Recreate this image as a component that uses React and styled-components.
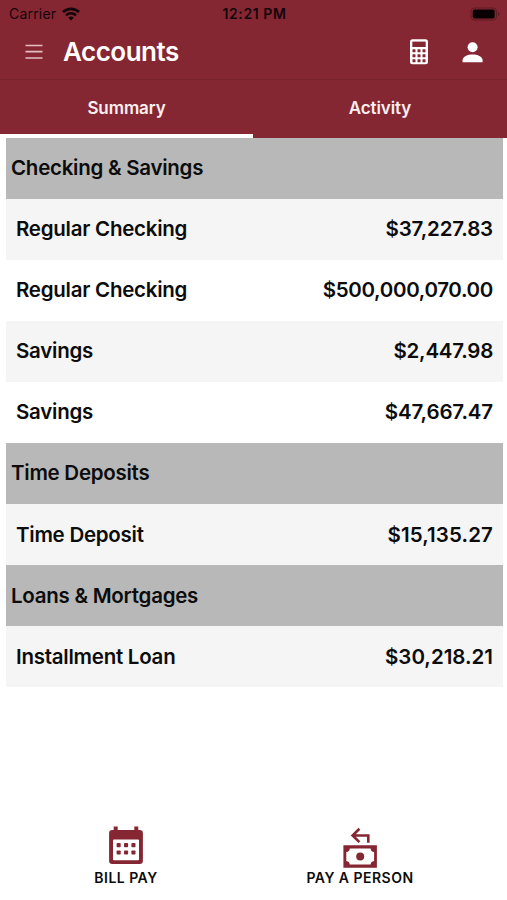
import React from "react";
import styled, { createGlobalStyle } from "styled-components";

const GlobalStyle = createGlobalStyle`
  * {
    box-sizing: border-box;
  }
  body {
    margin: 0;
    background: #ffffff;
    font-family: Inter, "Liberation Sans", sans-serif;
    color: #0c0c0c;
  }
`;

const Screen = styled.div`
  width: 507px;
  height: 900px;
  display: flex;
  flex-direction: column;
  overflow: hidden;
`;

const Header = styled.header`
  background: #852732;
  height: 138px;
`;

const StatusBar = styled.div`
  height: 27px;
  padding: 0 7px 0 9px;
  display: grid;
  grid-template-columns: 1fr auto 1fr;
  align-items: center;
  font-size: 14px;
  color: #14050a;
`;

const Carrier = styled.div`
  display: flex;
  align-items: center;
  gap: 6px;
  letter-spacing: 0.2px;
`;

const Time = styled.div`
  font-weight: 600;
  letter-spacing: 0.6px;
`;

const Battery = styled.svg`
  justify-self: end;
`;

const NavBar = styled.div`
  height: 53px;
  padding: 0 24px 2px 25px;
  display: flex;
  align-items: center;
  border-bottom: 1px solid #77222c;
`;

const Title = styled.h1`
  flex: 1;
  margin: 0 0 0 20px;
  padding-bottom: 2px;
  font-size: 26px;
  font-weight: 600;
  letter-spacing: -0.5px;
  color: #ffffff;
`;

const NavIcons = styled.div`
  display: flex;
  align-items: center;
  gap: 34px;
`;

const Tabs = styled.div`
  height: 58px;
  display: flex;
`;

const Tab = styled.div`
  width: ${(props) => (props.$active ? "253px" : "254px")};
  display: flex;
  align-items: center;
  justify-content: center;
  padding-top: 2px;
  border-bottom: 4px solid ${(props) => (props.$active ? "#ffffff" : "#852732")};
  font-size: 17px;
  font-weight: 600;
  letter-spacing: -0.1px;
  color: #fbeff0;
`;

const List = styled.main`
  flex: 1;
  padding: 0 4px 0 6px;
`;

const Section = styled.h2`
  height: 61.05px;
  margin: 0;
  padding: 0 5px 1.6px;
  display: flex;
  align-items: center;
  background: #b8b8b8;
  font-size: 20.5px;
  font-weight: 600;
  letter-spacing: -0.26px;
`;

const Row = styled.div`
  height: 61.05px;
  padding: 0 10px 1.6px;
  display: flex;
  align-items: center;
  justify-content: space-between;
  background: ${(props) => (props.$shaded ? "#f5f5f5" : "#ffffff")};
  font-size: 20.5px;
  font-weight: 600;
`;

const Label = styled.span`
  letter-spacing: -0.25px;
`;

const Balance = styled.span`
  letter-spacing: ${(props) => props.$spacing}px;
`;

const Footer = styled.footer`
  height: 76px;
  padding: 0 30px 0 9px;
  display: flex;
`;

const Action = styled.div`
  width: 234px;
  display: flex;
  flex-direction: column;
  align-items: center;
  gap: 1px;
  font-size: 14px;
  font-weight: 600;
  line-height: 18px;
  letter-spacing: 0.48px;
`;

const sections = [
  {
    title: "Checking & Savings",
    accounts: [
      { name: "Regular Checking", balance: "$37,227.83", spacing: -0.17 },
      { name: "Regular Checking", balance: "$500,000,070.00", spacing: -0.33 },
      { name: "Savings", balance: "$2,447.98", spacing: -0.25 },
      { name: "Savings", balance: "$47,667.47", spacing: -0.15 },
    ],
  },
  {
    title: "Time Deposits",
    accounts: [{ name: "Time Deposit", balance: "$15,135.27", spacing: 0.12 }],
  },
  {
    title: "Loans & Mortgages",
    accounts: [{ name: "Installment Loan", balance: "$30,218.21", spacing: 0 }],
  },
];

const WifiIcon = () => (
  <svg width="18" height="14" viewBox="0 0 18 14" fill="none" stroke="#14050a">
    <path d="M1 5a11.6 11.6 0 0 1 16 0" strokeWidth="2.7" />
    <path d="M4 8.3a7.3 7.3 0 0 1 10 0" strokeWidth="2.5" />
    <path d="M9 13.6 6.2 10.8a4 4 0 0 1 5.6 0z" fill="#14050a" stroke="none" />
  </svg>
);

const BatteryIcon = () => (
  <Battery width="30" height="14" viewBox="0 0 30 14">
    <rect x="1" y="1" width="25.5" height="12" rx="3.5" fill="none" stroke="#5d1a23" />
    <rect x="2.7" y="2.6" width="22" height="8.8" rx="2" fill="#080002" />
    <path d="M28 5v4q1.6-.6 1.6-2T28 5z" fill="#5d1a23" />
  </Battery>
);

const MenuIcon = () => (
  <svg width="18" height="16" viewBox="0 0 18 16" stroke="#e3bfc4" strokeWidth="1.7">
    <path d="M0.5 1.5h17M0.5 7.7h17M0.5 14h17" />
  </svg>
);

const CalculatorIcon = () => (
  <svg width="18" height="26" viewBox="0 0 18 26">
    <rect y="0.2" width="18" height="25" rx="2.5" fill="#ffffff" />
    <rect x="2.3" y="2.6" width="13.4" height="5.4" fill="#852732" />
    {[10.3, 15.3, 20.3].map((y) =>
      [2.5, 7.5, 12.5].map((x) => (
        <rect key={`${x}-${y}`} x={x} y={y} width="3" height="3" rx="0.5" fill="#852732" />
      ))
    )}
  </svg>
);

const PersonIcon = () => (
  <svg width="21" height="21" viewBox="0 0 21 21" fill="#ffffff">
    <circle cx="10.6" cy="5.3" r="5" />
    <path d="M0.6 20.3v-2.1c0-3.8 5.2-5.8 10-5.8s10 2 10 5.8v2.1z" />
  </svg>
);

const CalendarIcon = () => (
  <svg width="36" height="44" viewBox="108 824 36 44">
    <path
      fill="#852732"
      fillRule="evenodd"
      d="M113.7 826.4h4v3.6h16.6v-3.6h4v3.6h1.4a3.2 3.2 0 0 1 3.2 3.2v27.6a3.2 3.2 0 0 1-3.2 3.2h-27.4a3.2 3.2 0 0 1-3.2-3.2v-27.6a3.2 3.2 0 0 1 3.2-3.2h1.4zM114 839.5a1 1 0 0 0-1 1v18.7a1 1 0 0 0 1 1h24a1 1 0 0 0 1-1v-18.7a1 1 0 0 0-1-1z"
    />
    {[843.1, 850.5].map((y) =>
      [116.6, 124, 131.4].map((x) => (
        <rect key={`${x}-${y}`} x={x} y={y} width="4.1" height="4.1" rx="0.8" fill="#852732" />
      ))
    )}
  </svg>
);

const PayPersonIcon = () => (
  <svg width="36" height="44" viewBox="342 824 36 44">
    <path
      d="M359.4 828.8 352.6 835.5l6.8 6.6M352.8 835.5h15.5v7.3"
      fill="none"
      stroke="#852732"
      strokeWidth="2.6"
    />
    <path
      fill="#852732"
      fillRule="evenodd"
      d="M343.4 845.2h33.5v22.5h-33.5zM349.8 848.4q-.2 3.3-3.5 3.7v8.8q3.3.4 3.5 3.7h20.8q.2-3.3 3.5-3.7v-8.8q-3.3-.4-3.5-3.7z"
    />
    <circle cx="360.2" cy="856.4" r="4" fill="#852732" />
  </svg>
);

export default function App() {
  return (
    <>
      <GlobalStyle />
      <Screen>
        <Header>
          <StatusBar>
            <Carrier>
              Carrier
              <WifiIcon />
            </Carrier>
            <Time>12:21 PM</Time>
            <BatteryIcon />
          </StatusBar>
          <NavBar>
            <MenuIcon />
            <Title>Accounts</Title>
            <NavIcons>
              <CalculatorIcon />
              <PersonIcon />
            </NavIcons>
          </NavBar>
          <Tabs>
            <Tab $active>Summary</Tab>
            <Tab>Activity</Tab>
          </Tabs>
        </Header>
        <List>
          {sections.map((section) => (
            <React.Fragment key={section.title}>
              <Section>{section.title}</Section>
              {section.accounts.map((account, i) => (
                <Row key={account.balance} $shaded={i % 2 === 0}>
                  <Label>{account.name}</Label>
                  <Balance $spacing={account.spacing}>{account.balance}</Balance>
                </Row>
              ))}
            </React.Fragment>
          ))}
        </List>
        <Footer>
          <Action>
            <CalendarIcon />
            BILL PAY
          </Action>
          <Action>
            <PayPersonIcon />
            PAY A PERSON
          </Action>
        </Footer>
      </Screen>
    </>
  );
}
